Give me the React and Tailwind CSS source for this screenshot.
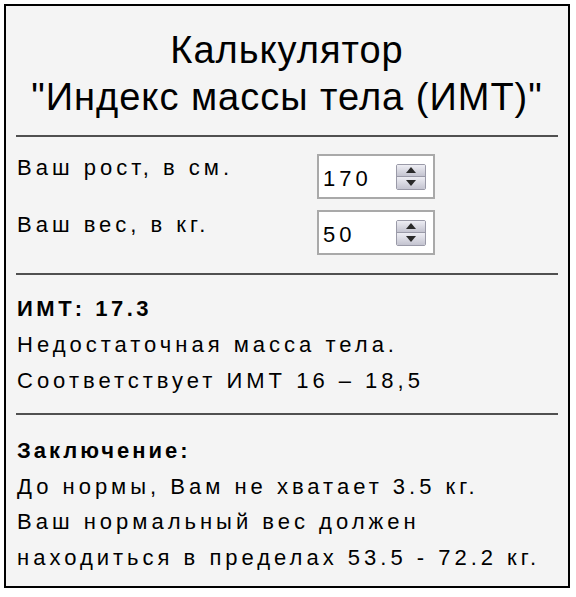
import React, { useState } from "react";

function Spinner() {
  return (
    <div className="flex flex-col w-[30px] h-[26px] border border-[#9a9aa8] rounded-[2px] overflow-hidden">
      <div className="flex-1 flex items-center justify-center bg-gradient-to-b from-[#eeeef4] to-[#c4c4d0] border-b border-[#9a9aa8]">
        <svg width="12" height="7" viewBox="0 0 12 7">
          <path d="M6 0 L11 6 L1 6 Z" fill="#2a2a2a" />
        </svg>
      </div>
      <div className="flex-1 flex items-center justify-center bg-gradient-to-b from-[#eeeef4] to-[#c4c4d0]">
        <svg width="12" height="7" viewBox="0 0 12 7">
          <path d="M6 7 L11 1 L1 1 Z" fill="#2a2a2a" />
        </svg>
      </div>
    </div>
  );
}

function NumberField({ value }) {
  return (
    <div className="w-[118px] h-[45px] bg-white border-2 border-[#a9a9a9] flex items-center justify-between pl-[4px] pr-[7px]">
      <span className="text-[22px] leading-none tracking-[4px] pt-[4px]">{value}</span>
      <Spinner />
    </div>
  );
}

export default function App() {
  const [height] = useState(170);
  const [weight] = useState(50);

  return (
    <div className="min-h-screen bg-white p-[4px] text-black" style={{ fontFamily: '"Liberation Sans", Arial, sans-serif' }}>
      <div className="w-[566px] h-[584px] border-2 border-black bg-[#f4f4f4]">
        {/* title */}
        <h1 className="pt-[21px] text-center text-[38px] leading-[47px] font-normal tracking-[1px]">
          Калькулятор
          <br />
          "Индекс массы тела (ИМТ)"
        </h1>
        <div className="mx-[10px] mt-[14px] h-[2px] bg-[#505050]" />

        {/* inputs */}
        <div className="px-[11px] mt-[17px] flex flex-col gap-[11px] text-[22px] tracking-[4px]">
          <div className="flex items-start">
            <span className="w-[300px] leading-[24px] mt-[2px]">Ваш рост, в см.</span>
            <NumberField value={height} />
          </div>
          <div className="flex items-start">
            <span className="w-[300px] leading-[24px] mt-[3px]">Ваш вес, в кг.</span>
            <NumberField value={weight} />
          </div>
        </div>
        <div className="mx-[10px] mt-[18px] h-[2px] bg-[#505050]" />

        {/* result */}
        <div className="px-[11px] mt-[16px] text-[22px] leading-[36px] tracking-[4px]">
          <div className="font-bold tracking-[3.5px]">ИМТ: 17.3</div>
          <div>Недостаточная масса тела.</div>
          <div>Соответствует ИМТ 16 – 18,5</div>
        </div>
        <div className="mx-[10px] mt-[14px] h-[2px] bg-[#505050]" />

        {/* conclusion */}
        <div className="px-[11px] mt-[18px] text-[22px] leading-[35.5px] tracking-[4px]">
          <div className="font-bold tracking-[3px]">Заключение:</div>
          <div>До нормы, Вам не хватает 3.5 кг.</div>
          <div>Ваш нормальный вес должен</div>
          <div>находиться в пределах 53.5 - 72.2 кг.</div>
        </div>
      </div>
    </div>
  );
}
